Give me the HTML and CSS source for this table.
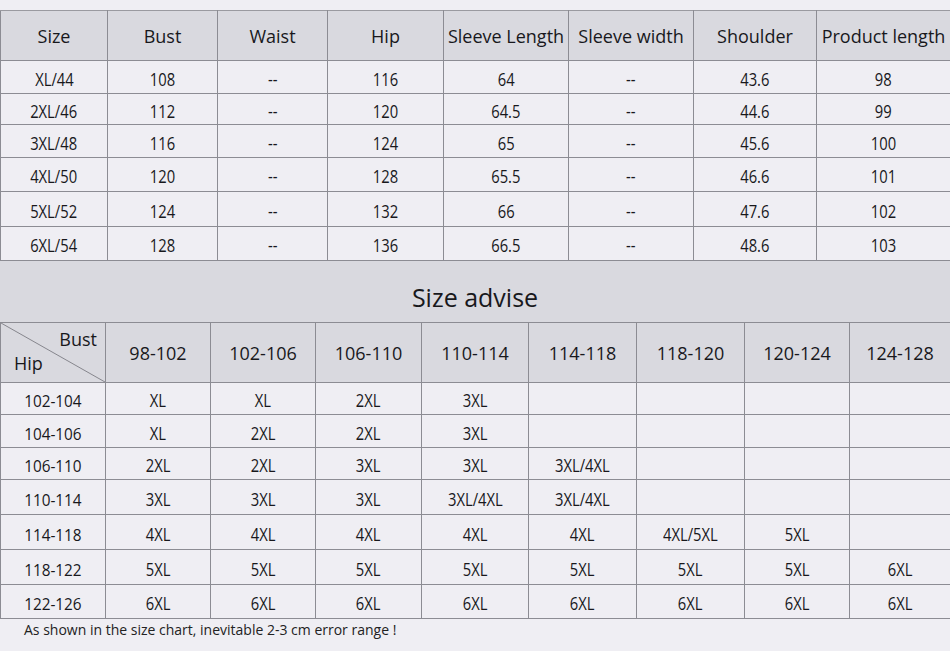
FILE: index.html
```html
<!DOCTYPE html>
<html>
<head>
<meta charset="utf-8">
<link rel="stylesheet" href="styles.css">
</head>
<body>
<div class="page">
  <table class="spec">
    <colgroup>
      <col style="width:107px"><col style="width:110px"><col style="width:110px"><col style="width:116px"><col style="width:125px"><col style="width:125px"><col style="width:123px"><col style="width:134px">
    </colgroup>
    <thead>
      <tr><th>Size</th><th>Bust</th><th>Waist</th><th>Hip</th><th>Sleeve Length</th><th>Sleeve width</th><th>Shoulder</th><th>Product length</th></tr>
    </thead>
    <tbody>
      <tr><td><span>XL/44</span></td><td><span>108</span></td><td><span>--</span></td><td><span>116</span></td><td><span>64</span></td><td><span>--</span></td><td><span>43.6</span></td><td><span>98</span></td></tr>
      <tr><td><span>2XL/46</span></td><td><span>112</span></td><td><span>--</span></td><td><span>120</span></td><td><span>64.5</span></td><td><span>--</span></td><td><span>44.6</span></td><td><span>99</span></td></tr>
      <tr><td><span>3XL/48</span></td><td><span>116</span></td><td><span>--</span></td><td><span>124</span></td><td><span>65</span></td><td><span>--</span></td><td><span>45.6</span></td><td><span>100</span></td></tr>
      <tr><td><span>4XL/50</span></td><td><span>120</span></td><td><span>--</span></td><td><span>128</span></td><td><span>65.5</span></td><td><span>--</span></td><td><span>46.6</span></td><td><span>101</span></td></tr>
      <tr><td><span>5XL/52</span></td><td><span>124</span></td><td><span>--</span></td><td><span>132</span></td><td><span>66</span></td><td><span>--</span></td><td><span>47.6</span></td><td><span>102</span></td></tr>
      <tr><td><span>6XL/54</span></td><td><span>128</span></td><td><span>--</span></td><td><span>136</span></td><td><span>66.5</span></td><td><span>--</span></td><td><span>48.6</span></td><td><span>103</span></td></tr>
    </tbody>
  </table>

  <div class="band">Size advise</div>

  <table class="advise">
    <colgroup>
      <col style="width:105px"><col style="width:105px"><col style="width:105px"><col style="width:106px"><col style="width:107px"><col style="width:108px"><col style="width:108px"><col style="width:105px"><col style="width:101px">
    </colgroup>
    <thead>
      <tr>
        <th class="corner">
          <svg class="diag" viewBox="0 0 105 59" preserveAspectRatio="none"><line x1="0" y1="0" x2="105" y2="59" stroke="#85858c" stroke-width="1"/></svg>
          <div class="corner-in"><span class="c-bust">Bust</span><span class="c-hip">Hip</span></div>
        </th>
        <th>98-102</th><th>102-106</th><th>106-110</th><th>110-114</th><th>114-118</th><th>118-120</th><th>120-124</th><th>124-128</th>
      </tr>
    </thead>
    <tbody>
      <tr><td class="hip"><span>102-104</span></td><td><span>XL</span></td><td><span>XL</span></td><td><span>2XL</span></td><td><span>3XL</span></td><td></td><td></td><td></td><td></td></tr>
      <tr><td class="hip"><span>104-106</span></td><td><span>XL</span></td><td><span>2XL</span></td><td><span>2XL</span></td><td><span>3XL</span></td><td></td><td></td><td></td><td></td></tr>
      <tr><td class="hip"><span>106-110</span></td><td><span>2XL</span></td><td><span>2XL</span></td><td><span>3XL</span></td><td><span>3XL</span></td><td><span>3XL/4XL</span></td><td></td><td></td><td></td></tr>
      <tr><td class="hip"><span>110-114</span></td><td><span>3XL</span></td><td><span>3XL</span></td><td><span>3XL</span></td><td><span>3XL/4XL</span></td><td><span>3XL/4XL</span></td><td></td><td></td><td></td></tr>
      <tr><td class="hip"><span>114-118</span></td><td><span>4XL</span></td><td><span>4XL</span></td><td><span>4XL</span></td><td><span>4XL</span></td><td><span>4XL</span></td><td><span>4XL/5XL</span></td><td><span>5XL</span></td><td></td></tr>
      <tr><td class="hip"><span>118-122</span></td><td><span>5XL</span></td><td><span>5XL</span></td><td><span>5XL</span></td><td><span>5XL</span></td><td><span>5XL</span></td><td><span>5XL</span></td><td><span>5XL</span></td><td><span>6XL</span></td></tr>
      <tr><td class="hip"><span>122-126</span></td><td><span>6XL</span></td><td><span>6XL</span></td><td><span>6XL</span></td><td><span>6XL</span></td><td><span>6XL</span></td><td><span>6XL</span></td><td><span>6XL</span></td><td><span>6XL</span></td></tr>
    </tbody>
  </table>
  <p class="note">As shown in the size chart, inevitable 2-3 cm error range !</p>
</div>
</body>
</html>
```
FILE: styles.css
```css
html, body {
  margin: 0;
  padding: 0;
  background: #efeef3;
}
.page {
  width: 950px;
  height: 651px;
  overflow: hidden;
  padding-top: 10px;
  box-sizing: border-box;
  font-family: "Open Sans", "Noto Sans", sans-serif;
  color: #18181c;
}
table {
  border-collapse: collapse;
  table-layout: fixed;
  width: 950px;
}
th, td {
  border: 1px solid #8c8c93;
  padding: 0;
  text-align: center;
  vertical-align: middle;
  white-space: nowrap;
  overflow: hidden;
}
th {
  background: #d9d9df;
  font-weight: normal;
  font-size: 18px;
}
td {
  background: #efeef3;
  font-size: 18px;
}
td span {
  display: inline-block;
  transform: scaleX(0.82);
  padding-top: 3px;
}
.spec thead tr { height: 50px; }
.spec tbody tr { height: 33px; }
.spec tbody tr:nth-child(2) { height: 31px; }
.spec tbody tr:nth-child(4) { height: 34px; }
.spec tbody tr:nth-child(5) { height: 35px; }
.spec tbody tr:nth-child(6) { height: 34px; }
.spec th, .spec td { border-top-color: #9a9aa0; }

.band {
  height: 61px;
  background: #d9d9df;
  display: flex;
  align-items: center;
  justify-content: center;
  font-size: 25px;
  padding-top: 10px;
  box-sizing: border-box;
}

.advise thead tr { height: 59px; }
.advise tbody tr { height: 33px; }
.advise tbody tr:nth-child(1) { height: 32px; }
.advise tbody tr:nth-child(3) { height: 32px; }
.advise tbody tr:nth-child(n+4) { height: 35px; }
.advise tbody tr:nth-child(7) { height: 34px; }
.advise td.hip {
  font-size: 17px;
}
.advise td.hip span {
  transform: scaleX(0.9);
  padding-top: 4px;
}

.corner {
  position: relative;
}
.diag {
  position: absolute;
  left: 0;
  top: 0;
  width: 100%;
  height: 100%;
}
.corner-in {
  position: relative;
  height: 59px;
}
.c-bust {
  position: absolute;
  right: 8px;
  top: 4px;
}
.c-hip {
  position: absolute;
  left: 13px;
  top: 28px;
}

.note {
  margin: 0;
  padding: 1px 0 0 24px;
  font-size: 14px;
  color: #222;
}
```
